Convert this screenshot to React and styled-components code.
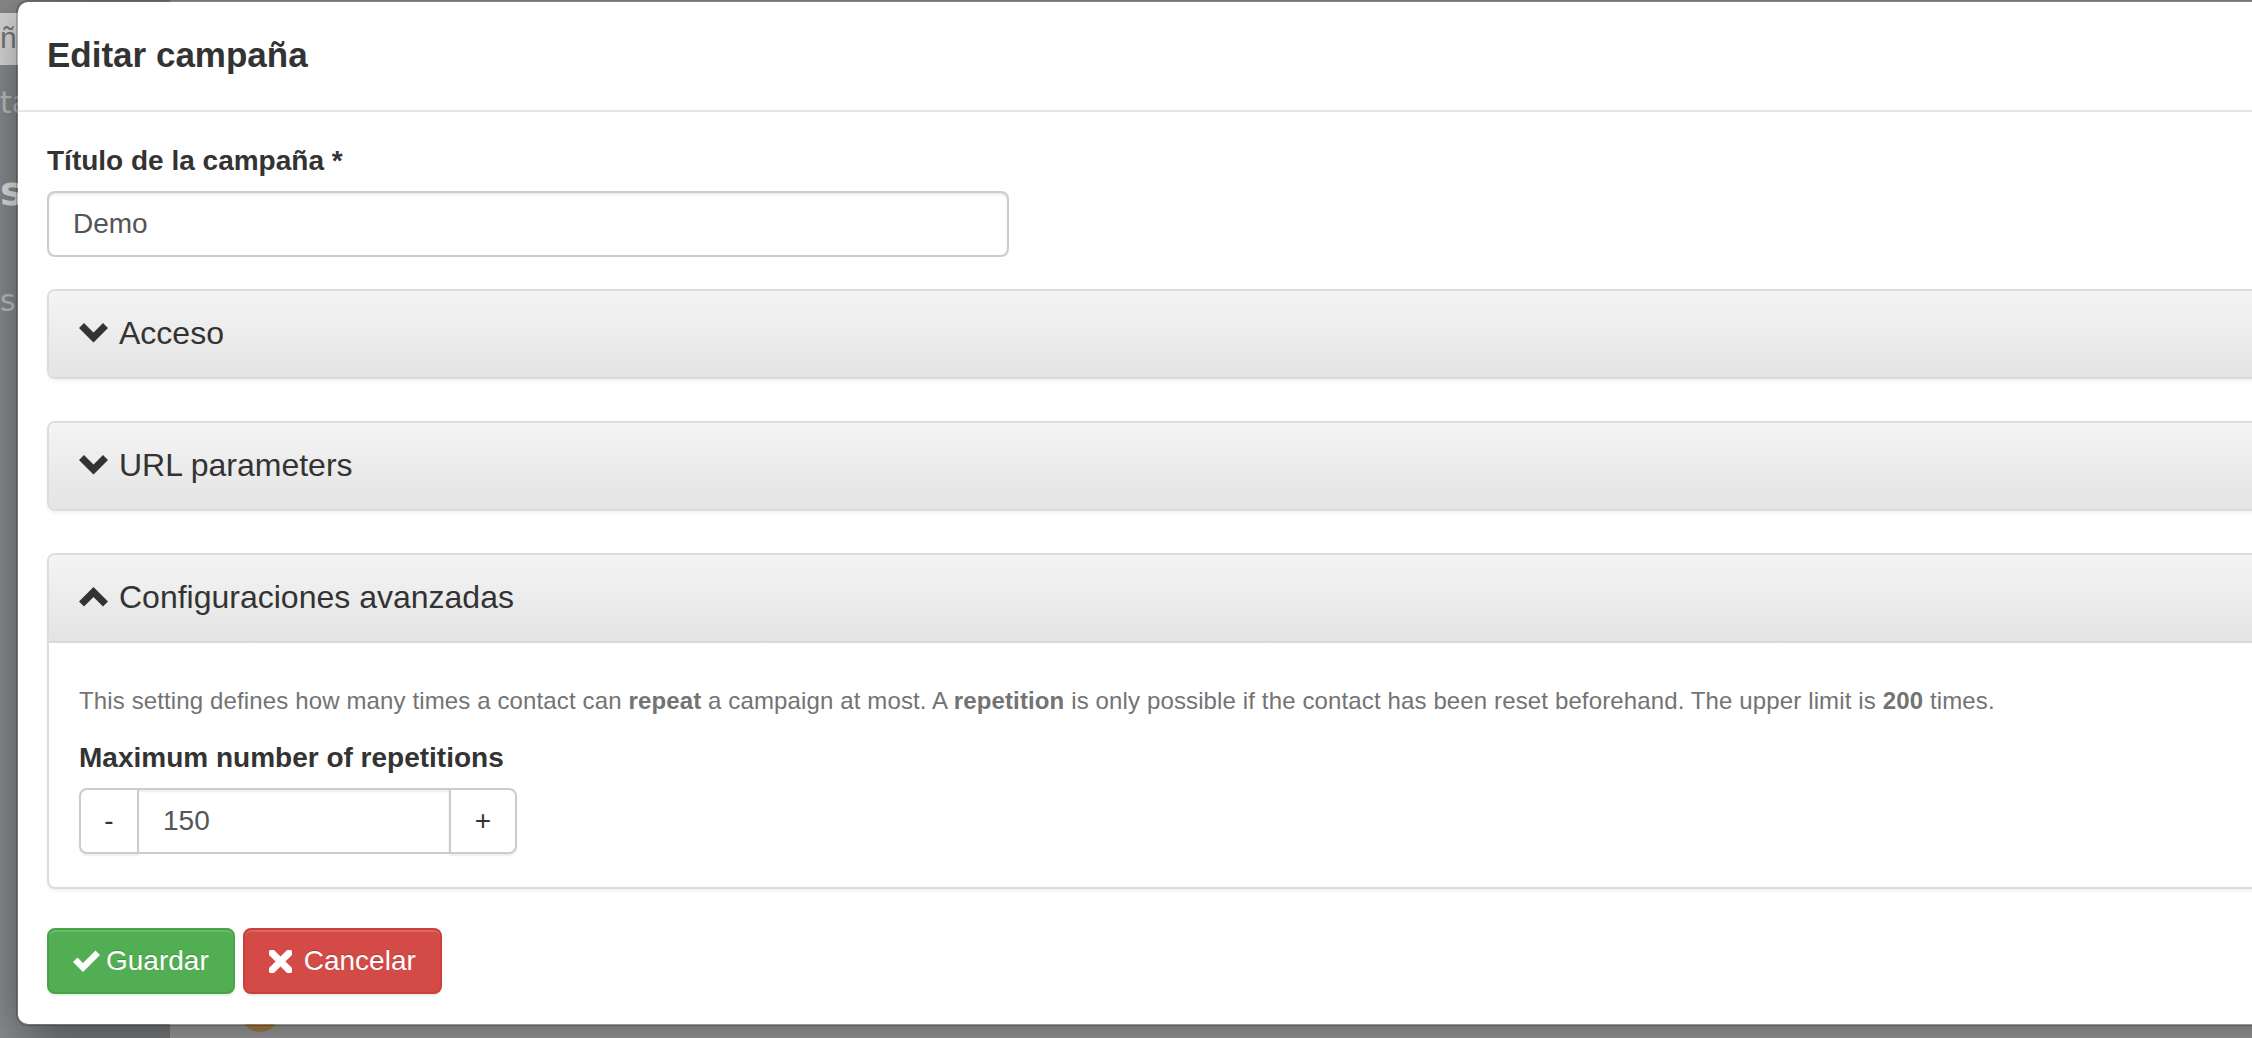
import React from 'react';
import styled, { createGlobalStyle } from 'styled-components';

const Global = createGlobalStyle`
  html, body {
    margin: 0;
    padding: 0;
  }
  body {
    font-family: "Liberation Sans", Arial, sans-serif;
    color: #333;
  }
  * {
    box-sizing: border-box;
  }
`;

const ChevronDown = () => (
  <svg width="29" height="20" viewBox="0 0 29 20">
    <polygon points="0,5 5,0 14.5,9.5 24,0 29,5 14.5,19.5" fill="#333" />
  </svg>
);

const ChevronUp = () => (
  <svg width="29" height="20" viewBox="0 0 29 20">
    <polygon points="0,14.5 14.5,0 29,14.5 24,19.5 14.5,10 5,19.5" fill="#333" />
  </svg>
);

const CheckIcon = () => (
  <svg width="27" height="22" viewBox="0 0 27 22">
    <polygon points="0,12 4.5,7.5 10,13 22.5,0.5 27,5 10,22" fill="#fff" />
  </svg>
);

const RemoveIcon = () => (
  <svg width="23" height="23" viewBox="0 0 23 23">
    <path d="M3 3 L20 20 M20 3 L3 20" stroke="#fff" strokeWidth="7" strokeLinecap="square" />
  </svg>
);

const panels = [
  { id: 1, title: 'Acceso', open: false, gap: 42 },
  { id: 2, title: 'URL parameters', open: false, gap: 42 },
  { id: 3, title: 'Configuraciones avanzadas', open: true, gap: 39 }
];

const App = () => {
  return (
    <>
      <Global />
      <Screen>
        <Sidebar>
          <SideBar />
          <SideSearch>ña</SideSearch>
          <SideItem>ta</SideItem>
          <SideHeading>s</SideHeading>
          <SideItem $top={70}>s</SideItem>
        </Sidebar>
        <Main>
          <Avatar />
        </Main>

        <Modal>
          <Header>
            <Title>Editar campaña</Title>
          </Header>
          <Body>
            <FormGroup>
              <Label>Título de la campaña *</Label>
              <TextInput defaultValue="Demo" />
            </FormGroup>

            {panels.map(({ id, title, open, gap }) => (
              <Panel key={id} $gap={gap}>
                <PanelHeading $open={open}>
                  {open ? <ChevronUp /> : <ChevronDown />}
                  <PanelTitle>{title}</PanelTitle>
                </PanelHeading>
                {open && (
                  <PanelBody>
                    <Help>
                      This setting defines how many times a contact can <b>repeat</b> a campaign at most. A{' '}
                      <b>repetition</b> is only possible if the contact has been reset beforehand. The upper limit is{' '}
                      <b>200</b> times.
                    </Help>
                    <Label>Maximum number of repetitions</Label>
                    <InputGroup>
                      <StepButton $w={60} $side="left">-</StepButton>
                      <GroupInput defaultValue="150" />
                      <StepButton $w={68} $side="right">+</StepButton>
                    </InputGroup>
                  </PanelBody>
                )}
              </Panel>
            ))}

            <Footer>
              <Btn $variant="success" $gap={6}>
                <CheckIcon />
                <span>Guardar</span>
              </Btn>
              <Btn $variant="danger" $gap={12}>
                <RemoveIcon />
                <span>Cancelar</span>
              </Btn>
            </Footer>
          </Body>
        </Modal>
      </Screen>
    </>
  );
};

const Screen = styled.div`
  position: relative;
  width: 100vw;
  height: 1038px;
  overflow: hidden;
  display: flex;
  background: #b3b3b3;
`;

const Sidebar = styled.aside`
  width: 170px;
  flex-shrink: 0;
  background: #909396;
  display: flex;
  flex-direction: column;
`;

const SideBar = styled.div`
  height: 13px;
  background: #86888a;
`;

const SideSearch = styled.div`
  height: 52px;
  background: linear-gradient(#d6d6d6, #e6e6e6);
  color: #7a7a7a;
  font-size: 30px;
  line-height: 50px;
`;

const SideItem = styled.div`
  margin-top: ${p => p.$top || 20}px;
  color: #c9cacb;
  font-size: 30px;
  line-height: 36px;
  font-family: "DejaVu Sans", sans-serif;
`;

const SideHeading = styled.div`
  margin-top: 48px;
  color: #eeeeee;
  font-size: 40px;
  font-weight: 700;
  line-height: 44px;
  font-family: "DejaVu Sans", sans-serif;
`;

const Main = styled.div`
  flex: 1;
  display: flex;
  flex-direction: column;
  justify-content: flex-end;
  background: linear-gradient(#a9a9a9, #bdbdbd);
`;

const Avatar = styled.div`
  width: 40px;
  height: 40px;
  margin: 0 0 6px 70px;
  border-radius: 50%;
  background: #c99b5c;
`;

const Modal = styled.div`
  position: absolute;
  top: 0;
  left: 16px;
  right: -80px;
  background: #fff;
  background-clip: padding-box;
  border: 2px solid rgba(0, 0, 0, 0.2);
  border-radius: 12px;
  box-shadow: 0 20px 60px rgba(0, 0, 0, 0.5);
`;

const Header = styled.div`
  padding: 28px 29px 30px;
  border-bottom: 2px solid #e5e5e5;
`;

const Title = styled.h4`
  margin: 0;
  font-size: 35px;
  font-weight: 700;
  line-height: 50px;
  color: #333;
`;

const Body = styled.div`
  padding: 29px 29px 30px;
`;

const FormGroup = styled.div`
  margin-bottom: 32px;
`;

const Label = styled.label`
  display: block;
  margin-bottom: 10px;
  font-size: 28px;
  font-weight: 700;
  line-height: 40px;
  color: #333;
`;

const TextInput = styled.input`
  display: block;
  width: 962px;
  height: 66px;
  padding: 0 24px;
  border: 2px solid #ccc;
  border-radius: 8px;
  box-shadow: inset 0 2px 2px rgba(0, 0, 0, 0.075);
  font-family: inherit;
  font-size: 28px;
  color: #555;
  outline: none;
`;

const Panel = styled.section`
  margin-bottom: ${p => p.$gap}px;
  border: 2px solid #dcdcdc;
  border-radius: 8px;
  box-shadow: 0 2px 4px rgba(0, 0, 0, 0.06);
  overflow: hidden;
`;

const PanelHeading = styled.div`
  display: flex;
  align-items: center;
  gap: 11px;
  padding: 17px 30px 19px;
  background: linear-gradient(#f4f4f4, #e4e4e4);
  border-bottom: ${p => (p.$open ? '2px solid #dadada' : 'none')};
`;

const PanelTitle = styled.h4`
  margin: 0;
  font-size: 32px;
  font-weight: 400;
  line-height: 50px;
  color: #333;
`;

const PanelBody = styled.div`
  padding: 41px 30px 33px;
`;

const Help = styled.p`
  margin: 0 0 20px;
  font-size: 24px;
  line-height: 34px;
  letter-spacing: 0.13px;
  color: #737373;
`;

const InputGroup = styled.div`
  display: flex;
  width: 438px;
  height: 66px;
`;

const StepButton = styled.button`
  width: ${p => p.$w}px;
  height: 66px;
  margin-left: ${p => (p.$side === 'right' ? '-2px' : '0')};
  padding: 0;
  border: 2px solid #ccc;
  border-radius: ${p => (p.$side === 'left' ? '8px 0 0 8px' : '0 8px 8px 0')};
  background: #fff;
  box-shadow: 0 2px 2px rgba(0, 0, 0, 0.07);
  font-family: inherit;
  font-size: 28px;
  color: #333;
`;

const GroupInput = styled.input`
  width: 314px;
  height: 66px;
  margin-left: -2px;
  padding: 0 24px;
  border: 2px solid #ccc;
  border-radius: 0;
  box-shadow: inset 0 2px 2px rgba(0, 0, 0, 0.075);
  font-family: inherit;
  font-size: 28px;
  color: #555;
  outline: none;
`;

const Footer = styled.div`
  display: flex;
  gap: 8px;
`;

const Btn = styled.button`
  display: inline-flex;
  align-items: center;
  gap: ${p => p.$gap || 8}px;
  height: 66px;
  padding: 0 24px;
  border: 2px solid ${p => (p.$variant === 'success' ? '#47a447' : '#c9403c')};
  border-radius: 8px;
  background: ${p => (p.$variant === 'success' ? '#52ae52' : '#d44a46')};
  box-shadow: inset 0 2px 0 rgba(255, 255, 255, 0.15), 0 2px 2px rgba(0, 0, 0, 0.075);
  font-family: inherit;
  font-size: 28px;
  line-height: 40px;
  color: #fff;
  text-shadow: 0 -1px 0 rgba(0, 0, 0, 0.2);
`;

export default App;
